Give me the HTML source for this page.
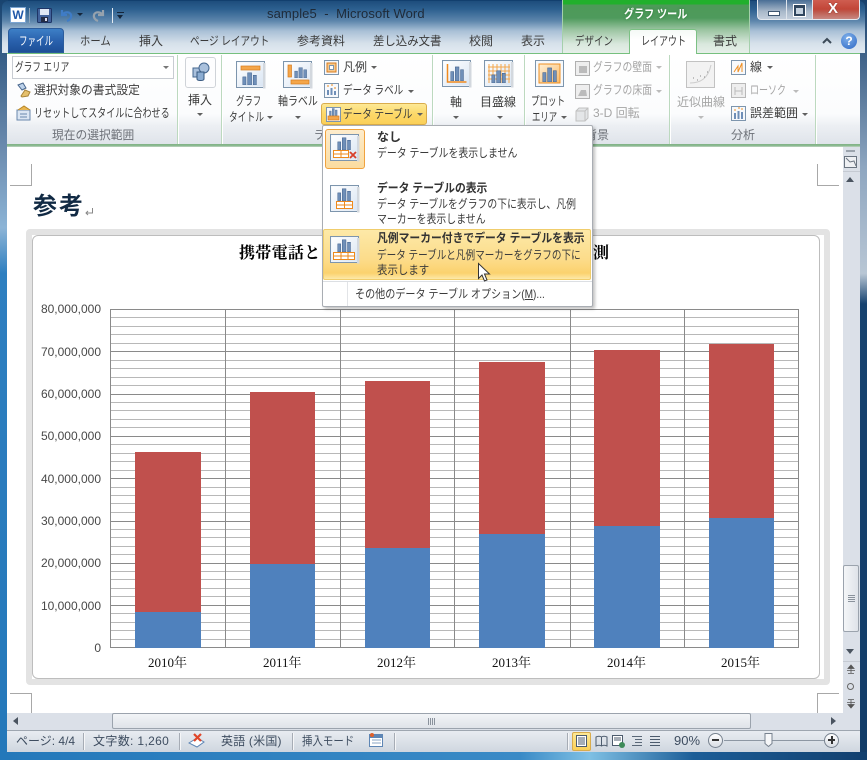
<!DOCTYPE html>
<html><head><meta charset="utf-8"><style>
html,body{margin:0;padding:0}
body{width:867px;height:760px;overflow:hidden;position:relative;background:#fff;font-family:"Liberation Sans","Noto Sans CJK JP",sans-serif;font-size:12px;color:#3b3b3b}
.a{position:absolute}
.t{position:absolute;white-space:nowrap;line-height:16px;transform-origin:0 0}
.g{color:#a5a5a5}
.ar{position:absolute;width:0;height:0;border:3px solid transparent;border-top:3px solid #606060;border-bottom:0}
.sep{position:absolute;width:1px;background:#bcd9bf;top:55px;height:89px;box-shadow:1px 0 0 #fff}
.sb{position:absolute;width:1px;background:#a6acb5;top:733px;height:17px;box-shadow:1px 0 0 #f5f6f8}
svg{position:absolute;overflow:visible}
.c{font-family:"Liberation Sans",sans-serif;font-size:12px;color:#484848;position:absolute;white-space:nowrap;text-align:right;width:70px;left:31px;line-height:14px}
.x{font-family:"Liberation Serif","Noto Serif CJK JP",serif;font-size:13px;color:#111;position:absolute;white-space:nowrap;line-height:14px;top:656px}
</style></head><body>
<!-- frame -->
<div class="a" style="left:0;top:0;width:867px;height:760px;background:linear-gradient(90deg,#2a7cc0 0,#3b8fcc 7px,#123f6e 8px,#123f6e 859px,#1e4f80 867px)"></div>
<div class="a" style="left:0;top:0;width:8px;height:760px;background:linear-gradient(180deg,#18436f 0,#6d8db0 20%,#8cb4d6 30%,#2e7fc0 36%,#2478ba 100%)"></div>
<div class="a" style="left:860px;top:0;width:7px;height:760px;background:linear-gradient(180deg,#17406c 0,#8ea6c0 22%,#b8c6d4 36%,#16426f 40%,#123c68 100%)"></div>
<div class="a" style="left:0;top:752px;width:867px;height:8px;background:linear-gradient(90deg,#2478ba,#3a8ac6 60%,#7fc0e4 68%,#1c5d97 80%,#123f6e)"></div>
<!-- title area -->
<div class="a" style="left:2px;top:1px;width:863px;height:52px;border-radius:6px 6px 0 0;background:linear-gradient(180deg,#1d4d7c 0,#2c5f8f 8px,#5d86ac 20px,#a9c0d6 30px,#d5e0ea 42px,#e3ebf2 52px)"></div>
<div class="a" style="left:562px;top:0;width:188px;height:53px;background:linear-gradient(180deg,#21b02c 0,#21b02c 4px,#4d9a58 5px,#4e9a5c 18px,#9cc5a2 30px,#d9e8dd 44px,#e6efe9 53px);border-left:1px solid #a5d0ac;border-right:1px solid #a5d0ac;box-sizing:border-box"></div>
<div class="t" style="left:267px;top:6px;font-size:13px;color:#1e2a38;letter-spacing:.1px">sample5 &nbsp;- &nbsp;Microsoft Word</div>
<div class="t" style="left:624px;top:6px;font-size:12px;font-weight:700;color:#fff;text-shadow:0 0 3px #2d7a3a;transform:scaleX(.84)">グラフ ツール</div>
<!-- QAT -->
<div class="a" style="left:10px;top:7px;width:14px;height:14px;background:#fff;border:1px solid #7aa4d2;text-align:center;font:bold 12px/14px 'Liberation Sans';color:#1f57a8">W</div>
<div class="a" style="left:29px;top:8px;width:1px;height:15px;background:#8fa6bc"></div>
<svg style="left:37px;top:8px" width="15" height="15"><rect x=".5" y=".5" width="14" height="14" rx="1" fill="#41629b" stroke="#1e3566"/><rect x="3" y="1" width="9" height="6" fill="#dfe8f5"/><rect x="4" y="9" width="7" height="5" fill="#222c45"/><rect x="8" y="10" width="2" height="3" fill="#dde"/></svg>
<svg style="left:60px;top:8px" width="13" height="15" fill="none"><path d="M2 2v5h5M2.500 6.500C5 3.500 10 3.500 11 7c.6 2.300-1 5-4 6" stroke="#3f7cc6" stroke-width="2.200"/></svg>
<div class="ar" style="left:77px;top:13px;border-top-color:#14253a"></div>
<svg style="left:92px;top:8px" width="13" height="15" fill="none"><path d="M11 2v5H6M10.500 6.500C8 3.500 3 3.500 2 7c-.6 2.300 1 5 4 6" stroke="#96a2ad" stroke-width="2.200"/></svg>
<div class="a" style="left:112px;top:8px;width:1px;height:15px;background:#e4ebf2"></div>
<div class="a" style="left:117px;top:12px;width:7px;height:1px;background:#14253a"></div>
<div class="ar" style="left:117px;top:15px;border-width:4px 3.500px 0;border-top-color:#14253a"></div>
<!-- window buttons -->
<div class="a" style="left:757px;top:0;width:103px;height:20px;border:1px solid #e4e9ef;border-top:0;border-radius:0 0 4px 4px;box-sizing:border-box;background:linear-gradient(180deg,#496e95,#a9b9ca 60%,#c3cedb);overflow:hidden">
<div class="a" style="left:54px;top:0;width:48px;height:20px;background:linear-gradient(180deg,#cf5d50,#c24638 45%,#be5b4e 60%,#c98f8a)"></div>
<div class="a" style="left:28px;top:0;width:1px;height:20px;background:#dfe5ec"></div><div class="a" style="left:54px;top:0;width:1px;height:20px;background:#dfe5ec"></div>
<div class="a" style="left:10px;top:11px;width:10px;height:3px;background:#fff;border:1px solid #3e5670"></div>
<div class="a" style="left:36px;top:5px;width:7px;height:6px;border:2px solid #30465e;border-top-width:3px;background:#c5d2df;outline:1px solid #fff"></div>
<div class="t" style="left:70px;top:1px;font:bold 15px/16px 'Liberation Sans';color:#fff;text-shadow:0 0 1px #5a1810">X</div>
</div>
<!-- tabs -->
<div class="a" style="left:8px;top:28px;width:56px;height:25px;border-radius:4px 4px 0 0;background:linear-gradient(180deg,#3d7fc6,#2a62ae 50%,#1d4f97);border:1px solid #2b5c9c;box-sizing:border-box"></div>
<div class="t" style="left:19px;top:33px;color:#fff;transform:scaleX(.71)">ファイル</div>
<div class="t" style="left:80px;top:33px;transform:scaleX(.86)">ホーム</div>
<div class="t" style="left:139px;top:33px">挿入</div>
<div class="t" style="left:190px;top:33px;transform:scaleX(.8)">ページ レイアウト</div>
<div class="t" style="left:297px;top:33px">参考資料</div>
<div class="t" style="left:373px;top:33px;transform:scaleX(.95)">差し込み文書</div>
<div class="t" style="left:469px;top:33px">校閲</div>
<div class="t" style="left:521px;top:33px">表示</div>
<div class="t" style="left:575px;top:33px;transform:scaleX(.79)">デザイン</div>
<div class="t" style="left:713px;top:33px">書式</div>
<svg style="left:822px;top:37px" width="10" height="7" fill="none"><path d="M1 6l4-4 4 4" stroke="#3c4a58" stroke-width="2"/></svg>
<div class="a" style="left:841px;top:33px;width:16px;height:16px;border-radius:50%;background:radial-gradient(circle at 40% 30%,#7fb0ea,#2d67c4);text-align:center;font:bold 12px/16px 'Liberation Sans';color:#fff">?</div>
<!-- ribbon -->
<div class="a" style="left:7px;top:53px;width:853px;height:92px;background:linear-gradient(180deg,#fff 0,#fbfcfd 60px,#eceff3 72px,#dfe4ea 90px);border-top:1px solid #76c07e;box-sizing:border-box"></div>
<div class="a" style="left:629px;top:29px;width:68px;height:25px;background:linear-gradient(180deg,#f4f9f5,#fff 40%);border:1px solid #7cc184;border-bottom:0;border-radius:3px 3px 0 0;box-sizing:border-box"></div>
<div class="t" style="left:641px;top:33px;transform:scaleX(.75)">レイアウト</div>
<div class="a" style="left:7px;top:144px;width:853px;height:3px;background:linear-gradient(180deg,#7fb184,#8dbc92 60%,#c5d6c8)"></div>
<div class="sep" style="left:177px"></div><div class="sep" style="left:221px"></div><div class="sep" style="left:432px;height:70px"></div><div class="sep" style="left:524px"></div><div class="sep" style="left:669px"></div><div class="sep" style="left:815px"></div>
<svg width="0" height="0" style="left:0;top:0"><defs>
<symbol id="big" viewBox="0 0 30 30"><rect x=".5" y=".5" width="28" height="26" fill="#f0f5fb" stroke="#7d95ad"/><rect x="1.500" y="1.500" width="26" height="24" fill="url(#bg)"/><rect x="27" y="2" width="2.500" height="25.500" fill="#d3d8de"/></symbol>
<symbol id="bars" viewBox="0 0 20 16" preserveAspectRatio="none"><rect x="1" y="6" width="4" height="10" fill="#6f8fb8" stroke="#3c5c88" stroke-width=".6"/><rect x="7" y="1" width="5" height="15" fill="#6f8fb8" stroke="#3c5c88" stroke-width=".6"/><rect x="14" y="4" width="4" height="12" fill="#6f8fb8" stroke="#3c5c88" stroke-width=".6"/></symbol>
<linearGradient id="bg" x1="0" y1="0" x2="1" y2="1"><stop offset="0" stop-color="#fff"/><stop offset="1" stop-color="#d9e5f3"/></linearGradient>
</defs></svg>
<!-- left group -->
<div class="a" style="left:12px;top:56px;width:162px;height:23px;background:#fff;border:1px solid #c8ccd2;box-sizing:border-box"></div>
<div class="t" style="left:15px;top:59px;transform:scaleX(.72)">グラフ エリア</div>
<div class="ar" style="left:163px;top:66px;border-top-color:#777"></div>
<svg style="left:15px;top:82px" width="17" height="16" fill="none"><path d="M3 3l5-2 3 5-4 2z" fill="#bcd2ea" stroke="#46658c"/><path d="M6 14l4-6 5 2-2 4-6 1z" fill="#e5c06c" stroke="#a9853a"/></svg>
<div class="t" style="left:34px;top:82px;transform:scaleX(.98)">選択対象の書式設定</div>
<svg style="left:15px;top:105px" width="17" height="16"><rect x="2" y="5" width="13" height="10" fill="#dbe6f3" stroke="#6a88ad"/><path d="M3 5l6-4 6 4" fill="#e9b650" stroke="#b58428"/><path d="M5 9h7M5 12h7" stroke="#6a88ad"/></svg>
<div class="t" style="left:34px;top:105px;transform:scaleX(.755)">リセットしてスタイルに合わせる</div>
<div class="t" style="left:52px;top:127px;color:#6d7178;transform:scaleX(.98)">現在の選択範囲</div>
<div class="t" style="left:314px;top:127px;color:#6d7178;transform:scaleX(.8)">ラベル</div>
<!-- insert -->
<div class="a" style="left:185px;top:57px;width:31px;height:31px;background:#fdfdfe;border:1px solid #cfd3d8;border-radius:3px;box-sizing:border-box"></div>
<svg style="left:192px;top:62px" width="18" height="20"><rect x="1" y="6" width="10" height="9" fill="#a9c0dc" stroke="#44668f"/><circle cx="12" cy="6" r="5" fill="#a9c0dc" stroke="#44668f"/><path d="M5 10h7v7c0 2-7 2-7 0z" fill="#8bacd2" stroke="#36587f"/></svg>
<div class="t" style="left:188px;top:92px">挿入</div>
<div class="ar" style="left:197px;top:113px"></div>
<!-- label group -->
<svg style="left:236px;top:61px" width="30" height="28"><use href="#big" width="30" height="30"/><rect x="5" y="5" width="19" height="4" fill="#f4a64a" stroke="#d87c1c" stroke-width=".7"/><use href="#bars" x="6" y="11" width="16" height="13"/></svg>
<div class="t" style="left:236px;top:93px;transform:scaleX(.7)">グラフ</div>
<div class="t" style="left:229px;top:109px;transform:scaleX(.73)">タイトル</div><div class="ar" style="left:267px;top:116px"></div>
<svg style="left:283px;top:61px" width="30" height="28"><use href="#big" width="30" height="30"/><rect x="5" y="4" width="3.500" height="12" fill="#f4a64a" stroke="#d87c1c" stroke-width=".7"/><use href="#bars" x="11" y="6" width="14" height="11"/><rect x="8" y="19" width="18" height="4" fill="#f4a64a" stroke="#d87c1c" stroke-width=".7"/></svg>
<div class="t" style="left:278px;top:93px;transform:scaleX(.83)">軸ラベル</div><div class="ar" style="left:295px;top:116px"></div>
<svg style="left:324px;top:60px" width="16" height="16"><rect x=".5" y=".5" width="14" height="14" fill="#f7f9fc" stroke="#7d95ad"/><rect x="3" y="3" width="9" height="9" fill="#f6c88c" stroke="#d87c1c"/><rect x="5.500" y="5.500" width="4" height="4" fill="#fff" stroke="#7d95ad"/></svg>
<div class="t" style="left:343px;top:59px">凡例</div><div class="ar" style="left:371px;top:66px"></div>
<svg style="left:324px;top:83px" width="16" height="16"><rect x=".5" y=".5" width="14" height="14" fill="#f7f9fc" stroke="#7d95ad"/><path d="M4 7v5M7.500 5v7M11 8v4" stroke="#6f8fb8" stroke-width="2"/><path d="M3 3h2M7 2h2M10 5h2" stroke="#e88a20"/></svg>
<div class="t" style="left:343px;top:82px;transform:scaleX(.8)">データ ラベル</div><div class="ar" style="left:408px;top:90px"></div>
<div class="a" style="left:321px;top:103px;width:106px;height:22px;background:linear-gradient(180deg,#fde996,#fcd869 50%,#fbd058);border:1px solid #d9ac4c;border-radius:3px;box-sizing:border-box"></div>
<svg style="left:326px;top:107px" width="15" height="15"><rect x=".5" y=".5" width="14" height="14" fill="#f7f9fc" stroke="#7d95ad"/><use href="#bars" x="3" y="1" width="9" height="8"/><rect x="2" y="9" width="11" height="4" fill="#f4a64a" stroke="#d87c1c" stroke-width=".7"/></svg>
<div class="t" style="left:343px;top:106px;transform:scaleX(.8)">データ テーブル</div><div class="ar" style="left:417px;top:113px"></div>
<!-- axes group -->
<svg style="left:442px;top:60px" width="30" height="28"><use href="#big" width="30" height="30"/><path d="M5.500 4v18h19" fill="none" stroke="#f08a1e" stroke-width="1.500"/><use href="#bars" x="8" y="6" width="15" height="15"/></svg>
<div class="t" style="left:450px;top:94px">軸</div><div class="ar" style="left:453px;top:116px"></div>
<svg style="left:484px;top:60px" width="30" height="28"><use href="#big" width="30" height="30"/><path d="M5 4v19M9 4v19M13 4v19M17 4v19M21 4v19M25 4v19M4 7h22M4 11h22M4 15h22M4 19h22" stroke="#f4a64a" fill="none"/><use href="#bars" x="7" y="10" width="16" height="13"/></svg>
<div class="t" style="left:480px;top:94px">目盛線</div><div class="ar" style="left:497px;top:116px"></div>
<!-- background group -->
<svg style="left:535px;top:60px" width="30" height="28"><rect x=".5" y=".5" width="28" height="26" fill="#f6f9fc" stroke="#7d95ad"/><rect x="4" y="4" width="21" height="19" fill="url(#og)" stroke="#ef8f22"/><defs><linearGradient id="og" x1="0" y1="0" x2="1" y2="1"><stop offset="0" stop-color="#fff0d6"/><stop offset="1" stop-color="#f8bb6c"/></linearGradient></defs><use href="#bars" x="7" y="7" width="16" height="15"/></svg>
<div class="t" style="left:531px;top:93px;transform:scaleX(.71)">プロット</div>
<div class="t" style="left:532px;top:109px;transform:scaleX(.7)">エリア</div><div class="ar" style="left:561px;top:116px"></div>
<svg style="left:575px;top:61px" width="15" height="15"><rect x=".5" y=".5" width="14" height="14" fill="#eee" stroke="#b0b0b0"/><path d="M4 5h8v7H4z" fill="#bbb"/></svg>
<div class="t g" style="left:593px;top:59px;transform:scaleX(.82)">グラフの壁面</div><div class="ar" style="left:656px;top:66px;border-top-color:#bbb"></div>
<svg style="left:575px;top:84px" width="15" height="15"><rect x=".5" y=".5" width="14" height="14" fill="#eee" stroke="#b0b0b0"/><path d="M3 12h9l-1-6H6z" fill="#bbb"/></svg>
<div class="t g" style="left:593px;top:82px;transform:scaleX(.82)">グラフの床面</div><div class="ar" style="left:656px;top:90px;border-top-color:#bbb"></div>
<svg style="left:575px;top:107px" width="15" height="15"><path d="M1 4l3-3h9v10l-3 3H1z" fill="#e4e6e8" stroke="#c0c0c0"/><path d="M1 4h9v10M10 4l3-3" stroke="#c0c0c0" fill="none"/></svg>
<div class="t g" style="left:593px;top:105px">3-D 回転</div>
<div class="t" style="left:585px;top:127px;color:#6d7178">背景</div>
<!-- analysis -->
<svg style="left:686px;top:61px" width="30" height="28"><rect x=".5" y=".5" width="28" height="26" fill="#f2f2f2" stroke="#c2c2c2"/><path d="M4 22c10 0 18-4 21-18" fill="none" stroke="#ccc"/><path d="M7 17h1M11 19h1M14 15h1M18 16h1M21 11h1" stroke="#888"/></svg>
<div class="t g" style="left:677px;top:94px">近似曲線</div><div class="ar" style="left:698px;top:116px;border-top-color:#bbb"></div>
<svg style="left:731px;top:60px" width="16" height="16"><rect x=".5" y=".5" width="14" height="14" fill="#f7f9fc" stroke="#7d95ad"/><path d="M3 12l4-6v6l4-9v9" fill="none" stroke="#ef8f22"/></svg>
<div class="t" style="left:750px;top:59px">線</div><div class="ar" style="left:767px;top:66px"></div>
<svg style="left:731px;top:83px" width="16" height="16"><rect x=".5" y=".5" width="14" height="14" fill="#eee" stroke="#b8b8b8"/><path d="M4 4v8M11 4v8M4 8h7" stroke="#bbb"/></svg>
<div class="t g" style="left:750px;top:82px;transform:scaleX(.75)">ローソク</div><div class="ar" style="left:793px;top:90px;border-top-color:#bbb"></div>
<svg style="left:731px;top:106px" width="16" height="16"><rect x=".5" y=".5" width="14" height="14" fill="#f7f9fc" stroke="#7d95ad"/><path d="M4 7v6M7.500 5v8M11 6v7" stroke="#6f8fb8" stroke-width="2"/><path d="M3 4h2M7 2h2M10 3h2" stroke="#ef8f22"/></svg>
<div class="t" style="left:750px;top:105px">誤差範囲</div><div class="ar" style="left:802px;top:113px"></div>
<div class="t" style="left:731px;top:127px;color:#6d7178">分析</div>
<!-- doc -->
<div class="a" style="left:7px;top:147px;width:836px;height:566px;background:#fff"></div>
<div class="a" style="left:10px;top:164px;width:21px;height:21px;border-right:1px solid #a8a8a8;border-bottom:1px solid #a8a8a8"></div>
<div class="a" style="left:817px;top:164px;width:21px;height:21px;border-left:1px solid #a8a8a8;border-bottom:1px solid #a8a8a8"></div>
<div class="a" style="left:10px;top:693px;width:21px;height:20px;border-right:1px solid #a8a8a8;border-top:1px solid #a8a8a8"></div>
<div class="a" style="left:817px;top:693px;width:21px;height:20px;border-left:1px solid #a8a8a8;border-top:1px solid #a8a8a8"></div>
<div class="t" style="left:33px;top:192px;font-size:24px;line-height:30px;font-weight:700;color:#112a44;letter-spacing:2px">参考</div>
<svg style="left:85px;top:208px" width="9" height="9" fill="none"><path d="M7.500 0v5H1M3 3L1 5l2 2" stroke="#888"/></svg>
<!-- chart frame -->
<div class="a" style="left:26px;top:229px;width:804px;height:456px;box-sizing:border-box;border:6px solid #e3e3e3;border-radius:4px"></div>
<div class="a" style="left:32px;top:235px;width:788px;height:444px;box-sizing:border-box;border:1px solid #bdbdbd;border-radius:6px;background:#fff"></div>
<div class="t" style="left:239px;top:244px;font-size:16px;line-height:20px;font-weight:700;color:#000;letter-spacing:.3px;font-family:'Liberation Serif','Noto Serif CJK JP',serif">携帯電話と</div>
<div class="t" style="left:593px;top:244px;font-size:16px;line-height:20px;font-weight:700;color:#000;font-family:'Liberation Serif','Noto Serif CJK JP',serif">測</div>
<svg style="left:0;top:0" width="867" height="760">
<path d="M110 317.500h689M110 326.500h689M110 334.500h689M110 343.500h689M110 360.500h689M110 368.500h689M110 377.500h689M110 385.500h689M110 402.500h689M110 410.500h689M110 419.500h689M110 427.500h689M110 444.500h689M110 453.500h689M110 461.500h689M110 470.500h689M110 487.500h689M110 495.500h689M110 503.500h689M110 512.500h689M110 529.500h689M110 537.500h689M110 546.500h689M110 554.500h689M110 571.500h689M110 579.500h689M110 588.500h689M110 596.500h689M110 613.500h689M110 622.500h689M110 630.500h689M110 639.500h689" stroke="#b8b8b8" fill="none"/>
<path d="M110 309.500h689M110 351.500h689M110 394.500h689M110 436.500h689M110 478.500h689M110 521.500h689M110 563.500h689M110 605.500h689M110 647.500h689M110.500 309v339M225.500 309v339M340.500 309v339M454.500 309v339M570.500 309v339M684.500 309v339M798.500 309v339" stroke="#8a8a8a" fill="none"/>
<g fill="#c0504d"><rect x="135" y="452" width="66" height="160"/><rect x="250" y="392" width="65" height="172"/><rect x="365" y="381" width="65" height="167"/><rect x="479" y="362" width="66" height="172"/><rect x="594" y="350" width="66" height="176"/><rect x="709" y="344" width="65" height="174"/></g>
<g fill="#4f81bd"><rect x="135" y="612" width="66" height="36"/><rect x="250" y="564" width="65" height="84"/><rect x="365" y="548" width="65" height="100"/><rect x="479" y="534" width="66" height="114"/><rect x="594" y="526" width="66" height="122"/><rect x="709" y="518" width="65" height="130"/></g>
</svg>
<div class="c" style="top:302px">80,000,000</div><div class="c" style="top:345px">70,000,000</div><div class="c" style="top:387px">60,000,000</div><div class="c" style="top:429px">50,000,000</div><div class="c" style="top:472px">40,000,000</div><div class="c" style="top:514px">30,000,000</div><div class="c" style="top:556px">20,000,000</div><div class="c" style="top:599px">10,000,000</div><div class="c" style="top:641px">0</div>
<div class="x" style="left:148px">2010年</div><div class="x" style="left:263px">2011年</div><div class="x" style="left:377px">2012年</div><div class="x" style="left:492px">2013年</div><div class="x" style="left:607px">2014年</div><div class="x" style="left:721px">2015年</div>
<!-- vscroll -->
<div class="a" style="left:843px;top:147px;width:17px;height:566px;background:#dbe0e8"></div>
<div class="a" style="left:846px;top:150px;width:9px;height:2px;background:#9ba3ad"></div>
<svg style="left:844px;top:156px" width="14" height="13"><rect x=".5" y=".5" width="12" height="11" fill="#eef0f3" stroke="#6a7480"/><path d="M2 2l4 4 4-1 2 5" fill="none" stroke="#6a7480"/></svg>
<div class="a" style="left:843px;top:171px;width:17px;height:1px;background:#c5cad2"></div>
<div class="ar" style="left:846px;top:177px;border:4.500px solid transparent;border-top:0;border-bottom:5px solid #4a5460"></div>
<div class="a" style="left:843px;top:565px;width:16px;height:67px;background:linear-gradient(90deg,#f4f6f8,#dfe3e9);border:1px solid #9ba3ad;border-radius:2px;box-sizing:border-box"></div>
<div class="a" style="left:848px;top:595px;width:7px;height:7px;background:repeating-linear-gradient(180deg,#8a929c 0 1px,transparent 1px 2px)"></div>
<div class="ar" style="left:846px;top:649px;border:4.500px solid transparent;border-bottom:0;border-top:5px solid #4a5460"></div>
<div class="a" style="left:843px;top:661px;width:17px;height:1px;background:#c5cad2"></div>
<svg style="left:846px;top:665px" width="10" height="9"><path d="M5 0l3 3.500H2zM1 5.500h8M5 3v5M2 8.500h6" stroke="#555" fill="#555" stroke-width=".8"/></svg>
<div class="a" style="left:847px;top:683px;width:5px;height:5px;border:1px solid #666;border-radius:50%"></div>
<svg style="left:846px;top:699px" width="10" height="9"><path d="M2 .5h6M1 3.500h8M5 1v5M5 9l3-3.500H2z" stroke="#555" fill="#555" stroke-width=".8"/></svg>
<!-- hscroll -->
<div class="a" style="left:7px;top:713px;width:853px;height:17px;background:#dbe0e8"></div>
<div class="a" style="left:112px;top:713px;width:639px;height:16px;background:linear-gradient(180deg,#f2f4f7,#dfe3e9);border:1px solid #9ba3ad;border-radius:2px;box-sizing:border-box"></div>
<div class="a" style="left:428px;top:718px;width:7px;height:7px;background:repeating-linear-gradient(90deg,#8a929c 0 1px,transparent 1px 2px)"></div>
<div class="ar" style="left:13px;top:717px;border:4.500px solid transparent;border-left:0;border-right:5px solid #4a5460"></div>
<div class="ar" style="left:831px;top:717px;border:4.500px solid transparent;border-right:0;border-left:5px solid #4a5460"></div>
<!-- status -->
<div class="a" style="left:7px;top:730px;width:853px;height:22px;background:linear-gradient(180deg,#e8ecf1,#cfd6df);border-top:1px solid #9ea6b0;box-sizing:border-box"></div>
<div class="t" style="left:16px;top:733px;color:#3e4d60">ページ: 4/4</div><div class="sb" style="left:83px"></div>
<div class="t" style="left:93px;top:733px;color:#3e4d60;letter-spacing:.35px">文字数: 1,260</div><div class="sb" style="left:179px"></div>
<svg style="left:188px;top:732px" width="17" height="16"><path d="M1 11l8-5 7 4-7 5z" fill="#fff" stroke="#5e86b5"/><path d="M6 2l7 7M13 2L6 9" stroke="#e0462a" stroke-width="2.200"/></svg>
<div class="t" style="left:221px;top:733px;color:#3e4d60;letter-spacing:.2px">英語 (米国)</div><div class="sb" style="left:292px"></div>
<div class="t" style="left:302px;top:733px;color:#3e4d60;transform:scaleX(.87)">挿入モード</div>
<svg style="left:369px;top:733px" width="15" height="14"><rect x=".5" y="1.500" width="13" height="12" fill="#fff" stroke="#5e86b5"/><rect x="1" y="2" width="12" height="3" fill="#5e86b5"/><path d="M3 7h9M3 10h9" stroke="#8aa6c6"/><circle cx="3" cy="2" r="2" fill="#e0602a"/></svg>
<div class="sb" style="left:394px"></div><div class="sb" style="left:567px"></div>
<div class="a" style="left:572px;top:732px;width:19px;height:19px;background:linear-gradient(180deg,#fde996,#fbd058);border:1px solid #d9ac4c;border-radius:2px;box-sizing:border-box"></div>
<svg style="left:576px;top:735px" width="11" height="13"><rect x=".5" y=".5" width="10" height="11" fill="#fff" stroke="#4c5b6d"/><path d="M2 3h7M2 5h7M2 7h7M2 9h7" stroke="#4c5b6d"/></svg>
<svg style="left:595px;top:735px" width="13" height="13" fill="none"><path d="M6.500 2C5 1 3 1 1 2v9c2-1 4-1 5.500 0 1.500-1 3.500-1 5.500 0V2c-2-1-4-1-5.500 0zm0 0v9" stroke="#4c5b6d"/></svg>
<svg style="left:612px;top:735px" width="14" height="13"><rect x=".5" y=".5" width="10" height="10" fill="#fff" stroke="#4c5b6d"/><path d="M2 3h7M2 5h7" stroke="#4c5b6d"/><circle cx="10" cy="10" r="3" fill="#3d8a58"/></svg>
<svg style="left:631px;top:735px" width="12" height="12"><path d="M1 1.500h10M4 4.500h7M4 7.500h7M1 10.500h10" stroke="#5a6878"/></svg>
<svg style="left:649px;top:735px" width="12" height="12"><path d="M1 1.500h10M1 4.500h10M1 7.500h10M1 10.500h10" stroke="#4c5b6d"/></svg>
<div class="t" style="left:674px;top:733px;font-size:13px;color:#3e4d60">90%</div>
<div class="a" style="left:724px;top:740px;width:100px;height:1px;background:#8d97a3"></div>
<div class="a" style="left:708px;top:733px;width:15px;height:15px;border:1px solid #77828f;border-radius:50%;background:linear-gradient(180deg,#fff,#d8dde4);box-sizing:border-box"></div><div class="a" style="left:712px;top:739px;width:7px;height:2px;background:#333"></div>
<div class="a" style="left:824px;top:733px;width:15px;height:15px;border:1px solid #77828f;border-radius:50%;background:linear-gradient(180deg,#fff,#d8dde4);box-sizing:border-box"></div><div class="a" style="left:828px;top:739px;width:7px;height:2px;background:#333"></div><div class="a" style="left:831px;top:736px;width:2px;height:8px;background:#333"></div>
<svg style="left:764px;top:733px" width="10" height="15"><path d="M1 .5h7v10l-3.500 3-3.500-3z" fill="#f6f7f9" stroke="#77828f"/></svg>
<!-- menu -->
<div class="a" style="left:322px;top:125px;width:271px;height:182px;background:#fff;border:1px solid #a9adb3;border-radius:2px;box-sizing:border-box;box-shadow:2px 2px 3px rgba(0,0,0,.25)"></div>
<div class="a" style="left:325px;top:129px;width:40px;height:40px;background:linear-gradient(180deg,#fdeccc,#fbdca0);border:1px solid #f0a23e;border-radius:3px;box-sizing:border-box"></div>
<svg style="left:330px;top:134px" width="30" height="30"><use href="#big" width="30" height="30"/><use href="#bars" x="7" y="3" width="15" height="13"/><path d="M3.500 16.500h15v7h-15z" fill="#fff" stroke="#ee8a1c"/><path d="M3.500 20h15M11 16.500v7" stroke="#ee8a1c"/><path d="M20 18l6 6M26 18l-6 6" stroke="#d8402a" stroke-width="1.800"/></svg>
<div class="t" style="left:377px;top:129px;font-weight:700;color:#333">なし</div>
<div class="t" style="left:377px;top:145px;transform:scaleX(.825)">データ テーブルを表示しません</div>
<svg style="left:330px;top:185px" width="30" height="30"><use href="#big" width="30" height="30"/><use href="#bars" x="7" y="3" width="15" height="13"/><path d="M6.500 16.500h16v7h-16z" fill="#fff" stroke="#ee8a1c"/><path d="M6.500 20h16M14.500 16.500v7" stroke="#ee8a1c"/></svg>
<div class="t" style="left:377px;top:180px;font-weight:700;color:#333;transform:scaleX(.9)">データ テーブルの表示</div>
<div class="t" style="left:377px;top:196px;transform:scaleX(.82)">データ テーブルをグラフの下に表示し、凡例</div>
<div class="t" style="left:377px;top:211px;transform:scaleX(.825)">マーカーを表示しません</div>
<div class="a" style="left:323px;top:229px;width:268px;height:51px;background:linear-gradient(180deg,#fde9a8,#fcdc8a 60%,#fbd26e 88%,#fde9a8);border:1px solid #f0cd6c;border-radius:2px;box-sizing:border-box"></div>
<svg style="left:330px;top:236px" width="30" height="30"><use href="#big" width="30" height="30"/><use href="#bars" x="7" y="3" width="15" height="13"/><path d="M3.500 16.500h21v7h-21z" fill="#fff" stroke="#ee8a1c"/><path d="M3.500 20h21M11 16.500v7M18 16.500v7" stroke="#ee8a1c"/></svg>
<div class="t" style="left:377px;top:230px;font-weight:700;color:#333;transform:scaleX(.9)">凡例マーカー付きでデータ テーブルを表示</div>
<div class="t" style="left:377px;top:247px;transform:scaleX(.8)">データ テーブルと凡例マーカーをグラフの下に</div>
<div class="t" style="left:377px;top:262px;transform:scaleX(.87)">表示します</div>
<div class="a" style="left:323px;top:281px;width:269px;height:1px;background:#dcdfe3"></div>
<div class="a" style="left:347px;top:282px;width:1px;height:24px;background:#e2e4e7"></div>
<div class="t" style="left:355px;top:286px;transform:scaleX(.84)">その他のデータ テーブル オプション(<u>M</u>)...</div>
<svg style="left:478px;top:263px" width="13" height="20"><path d="M.5.500v15l3.500-3.500 2.500 6 2.500-1-2.500-6h5z" fill="#fff" stroke="#333"/></svg>
</body></html>
